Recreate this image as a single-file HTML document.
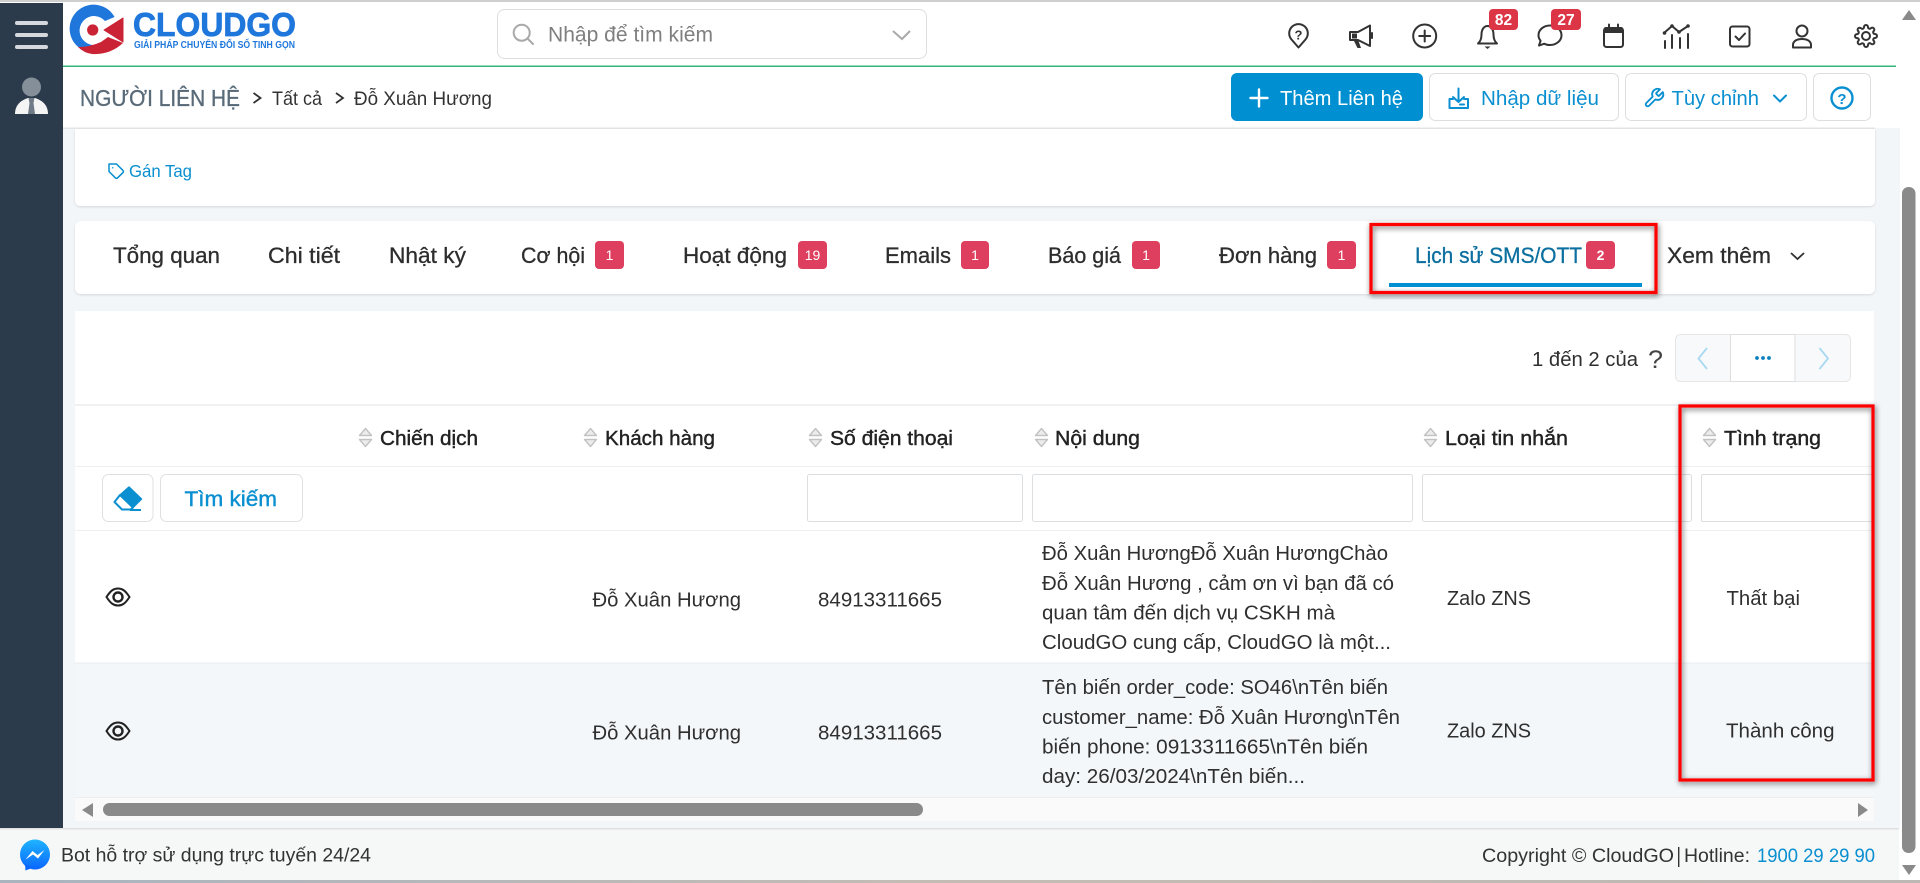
<!DOCTYPE html>
<html lang="vi">
<head>
<meta charset="utf-8">
<title>CloudGO - Người liên hệ</title>
<style>
html,body{margin:0;padding:0;width:1920px;height:883px;overflow:hidden;background:#fff}
svg{display:block}
text{font-family:"Liberation Sans","DejaVu Sans",sans-serif;fill:#333;white-space:pre}
.t{font-size:20px;fill:#2f2f2f}
.h{font-size:20px;fill:#222;stroke:#222;stroke-width:.4px}
.tab{font-size:22.5px;fill:#2d2d2d;stroke:#2d2d2d;stroke-width:.3px}
.b{font-size:14px;fill:#fff;text-anchor:middle}
.blue{fill:#0a8fd0}
.ic{fill:none;stroke:#333;stroke-width:2;stroke-linecap:round;stroke-linejoin:round}
.bi{fill:none;stroke:#0a8fd0;stroke-width:2;stroke-linecap:round;stroke-linejoin:round}
.sort{fill:#ececec;stroke:#c2c2c2;stroke-width:1.4;stroke-linejoin:round}
</style>
</head>
<body>
<svg width="1920" height="883" viewBox="0 0 1920 883" xmlns="http://www.w3.org/2000/svg">
<defs>
<filter id="cs" x="-2%" y="-10%" width="104%" height="120%"><feDropShadow dx="0" dy="1" stdDeviation="1.2" flood-color="#000" flood-opacity=".12"/></filter>
<filter id="rs" x="-10%" y="-10%" width="120%" height="120%"><feDropShadow dx="1" dy="2" stdDeviation="3" flood-color="#000" flood-opacity=".6"/></filter>
<linearGradient id="ms" x1="0" y1="0" x2="0" y2="1"><stop offset="0" stop-color="#1fb4ff"/><stop offset="1" stop-color="#0a66ff"/></linearGradient>
<linearGradient id="bt" x1="0" y1="0" x2="1" y2="0"><stop offset="0" stop-color="#a9b4bf"/><stop offset=".5" stop-color="#c4bcb4"/><stop offset="1" stop-color="#bdb8b4"/></linearGradient>
</defs>

<!-- base -->
<rect width="1920" height="883" fill="#fff"/>
<rect x="63" y="128" width="1837" height="700" fill="#f3f6f9"/>
<rect x="0" y="0" width="1920" height="2" fill="#cfcfcf"/>

<!-- sidebar -->
<rect x="0" y="3" width="63" height="825" fill="#2c3b4b"/>
<rect x="15" y="21" width="33" height="4" rx="2" fill="#d5d8dc"/>
<rect x="15" y="33" width="33" height="4" rx="2" fill="#d5d8dc"/>
<rect x="15" y="45" width="33" height="4" rx="2" fill="#d5d8dc"/>
<circle cx="31.5" cy="87" r="9.5" fill="#858f99"/>
<path d="M15 114C15 104 22 100 28 98L35 98C41 100 48 104 48 114Z" fill="#f4f4f4"/>
<path d="M28.5 98L34.5 98L33.5 103L35 114L28 114L29.5 103Z" fill="#6f7b87"/>

<!-- logo -->
<path d="M114.6 17A24 24 0 1 0 78.5 47.3Q92 47 103 42A14.5 14.5 0 1 1 105 21Z" fill="#1f77dc"/>
<circle cx="92.7" cy="30" r="5.6" fill="#cb2336"/>
<path d="M104 30L123 18V42Z" fill="#cb2336" stroke="#cb2336" stroke-width="1" stroke-linejoin="round"/>
<path d="M78 47Q90 47 101 42L108 37L123 43Q110 55 92 54Q84 53 78 47Z" fill="#cb2336"/>
<text x="133" y="36" font-size="33" font-weight="700" textLength="163" lengthAdjust="spacingAndGlyphs" style="fill:#1f77dc;stroke:#1f77dc;stroke-width:.8px">CLOUDGO</text>
<text x="134" y="48" font-size="10.5" font-weight="700" textLength="161" lengthAdjust="spacingAndGlyphs" style="fill:#1f77dc">GIẢI PHÁP CHUYỂN ĐỔI SỐ TINH GỌN</text>

<!-- search -->
<rect x="497.5" y="9.5" width="429" height="49" rx="7" fill="#fff" stroke="#dedede"/>
<circle cx="521.7" cy="32.7" r="8" fill="none" stroke="#a9a9a9" stroke-width="2"/>
<path d="M527.5 38.5L533 44" stroke="#a9a9a9" stroke-width="2" stroke-linecap="round"/>
<text x="548" y="41.7" font-size="21.5" textLength="165" lengthAdjust="spacingAndGlyphs" style="fill:#7f7f7f">Nhập để tìm kiếm</text>
<path d="M893 31L902 39L910 31" fill="none" stroke="#a9a9a9" stroke-width="2"/>

<!-- header icons -->
<path class="ic" d="M1298.5 47.5L1291.5 39.5A9.3 9.3 0 1 1 1305.5 39.5Z"/>
<text x="1298.5" y="39.5" font-size="13" font-weight="700" text-anchor="middle">?</text>
<path class="ic" stroke-width="2.4" d="M1350 32H1358L1370 25.5V46L1358 40H1350Z"/>
<path d="M1354 41L1357.5 48H1361L1358.5 41Z" fill="#333"/>
<path d="M1352 33.5H1357V38.5H1352Z" fill="#333"/>
<path d="M1372 33V38" class="ic"/>
<circle class="ic" cx="1424.7" cy="36" r="11.5"/>
<path class="ic" d="M1424.7 30.5V41.5M1419.2 36H1430.2"/>
<path class="ic" d="M1478 43.5C1481 41 1481.5 38 1481.5 34.5C1481.5 29.5 1484 26 1487.5 26C1491 26 1493.5 29.5 1493.5 34.5C1493.5 38 1494 41 1497 43.5Z"/>
<path d="M1484.5 46.5H1490.5L1487.5 49Z" fill="#333"/>
<path class="ic" d="M1550 25.5C1556.4 25.5 1561.5 29.8 1561.5 35.2C1561.5 40.6 1556.4 45 1550 45C1548 45 1546 44.6 1544.4 43.7L1539 45.5L1540.6 40.7C1539.2 39 1538.5 37.2 1538.5 35.2C1538.5 29.8 1543.6 25.5 1550 25.5Z"/>
<rect x="1489" y="9" width="29" height="21" rx="4" fill="#dc3545"/>
<text class="b" x="1503.5" y="25" style="font-size:15.5px;font-weight:700">82</text>
<rect x="1551" y="9" width="30" height="21" rx="4" fill="#dc3545"/>
<text class="b" x="1566" y="25" style="font-size:15.5px;font-weight:700">27</text>
<rect class="ic" x="1604" y="28" width="19" height="19" rx="2.5"/>
<path d="M1604 33V29Q1604 27 1606 27H1621Q1623 27 1623 29V33Z" fill="#333"/>
<path class="ic" d="M1609 24.5V27M1618 24.5V27"/>
<path class="ic" d="M1664 33L1672 26L1679 32L1688 26"/>
<circle cx="1664.5" cy="33" r="1.8" fill="#333"/><circle cx="1672" cy="26" r="1.8" fill="#333"/><circle cx="1679" cy="32" r="1.8" fill="#333"/><circle cx="1688" cy="26" r="1.8" fill="#333"/>
<path class="ic" d="M1665 41V48M1672 35V48M1680 38V48M1688 34V48"/>
<rect class="ic" x="1730" y="26.5" width="19.5" height="20" rx="2.5"/>
<path class="ic" d="M1735.5 36.5L1739 40L1745 33.5"/>
<circle class="ic" cx="1802" cy="31" r="5.5"/>
<path class="ic" d="M1793 47.5V45C1793 41 1797 39 1802 39C1807 39 1811 41 1811 45V47.5Z"/>
<g transform="translate(1854 24)"><circle class="ic" cx="12" cy="12" r="4"/><path class="ic" d="M19.4 15a1.65 1.65 0 0 0 .33 1.82l.06.06a2 2 0 0 1 0 2.83 2 2 0 0 1-2.83 0l-.06-.06a1.65 1.65 0 0 0-1.82-.33 1.65 1.65 0 0 0-1 1.51V21a2 2 0 0 1-2 2 2 2 0 0 1-2-2v-.09A1.65 1.65 0 0 0 9 19.4a1.65 1.65 0 0 0-1.82.33l-.06.06a2 2 0 0 1-2.83 0 2 2 0 0 1 0-2.83l.06-.06a1.65 1.65 0 0 0 .33-1.82 1.65 1.65 0 0 0-1.51-1H3a2 2 0 0 1-2-2 2 2 0 0 1 2-2h.09A1.65 1.65 0 0 0 4.6 9a1.65 1.65 0 0 0-.33-1.82l-.06-.06a2 2 0 0 1 0-2.83 2 2 0 0 1 2.83 0l.06.06a1.65 1.65 0 0 0 1.82.33H9a1.65 1.65 0 0 0 1-1.51V3a2 2 0 0 1 2-2 2 2 0 0 1 2 2v.09a1.65 1.65 0 0 0 1 1.51 1.65 1.65 0 0 0 1.82-.33l.06-.06a2 2 0 0 1 2.83 0 2 2 0 0 1 0 2.83l-.06.06a1.65 1.65 0 0 0-.33 1.82V9a1.65 1.65 0 0 0 1.51 1H21a2 2 0 0 1 2 2 2 2 0 0 1-2 2h-.09a1.65 1.65 0 0 0-1.51 1z"/></g>

<rect x="63" y="65.5" width="1833" height="1.5" fill="#34b67a"/>

<!-- breadcrumb -->
<text x="80" y="106" font-size="23" textLength="160" lengthAdjust="spacingAndGlyphs" style="fill:#596a78;stroke:#596a78;stroke-width:.35px">NGƯỜI LIÊN HỆ</text>
<path d="M253.5 93L260.5 98L253.5 103" fill="none" stroke="#333" stroke-width="1.8"/>
<text x="272" y="105" font-size="19.5" textLength="50" lengthAdjust="spacingAndGlyphs">Tất cả</text>
<path d="M336 93L343 98L336 103" fill="none" stroke="#333" stroke-width="1.8"/>
<text x="354" y="105" font-size="19.5" textLength="138" lengthAdjust="spacingAndGlyphs">Đỗ Xuân Hương</text>

<!-- action buttons -->
<rect x="1231" y="73" width="192" height="48" rx="6" fill="#008fd1"/>
<path d="M1259 89.5V106.5M1250.5 98H1267.5" stroke="#fff" stroke-width="2.4" stroke-linecap="round"/>
<text x="1280" y="105" font-size="20" textLength="123" lengthAdjust="spacingAndGlyphs" style="fill:#fff">Thêm Liên hệ</text>
<rect x="1429.5" y="73.5" width="189" height="47" rx="6" fill="#fff" stroke="#dedede"/>
<path class="bi" d="M1458.5 88.5V102M1453 97L1458.5 102L1464 97"/>
<path class="bi" d="M1453 99H1449.5V108H1468V99H1464M1460 104.5H1464"/>
<text class="blue" x="1481" y="105" font-size="20.5" textLength="118" lengthAdjust="spacingAndGlyphs">Nhập dữ liệu</text>
<rect x="1625.5" y="73.5" width="181" height="47" rx="6" fill="#fff" stroke="#dedede"/>
<g transform="translate(1643 87) scale(.92)"><path class="bi" d="M14.7 6.3a1 1 0 0 0 0 1.4l1.6 1.6a1 1 0 0 0 1.4 0l3.77-3.77a6 6 0 0 1-7.94 7.94l-6.91 6.91a2.12 2.12 0 0 1-3-3l6.91-6.91a6 6 0 0 1 7.94-7.94l-3.76 3.76z"/></g>
<text class="blue" x="1671.5" y="105" font-size="20.5" textLength="87.5" lengthAdjust="spacingAndGlyphs">Tùy chỉnh</text>
<path class="bi" d="M1774 95.5L1780 101.5L1786 95.5"/>
<rect x="1813.5" y="73.5" width="57" height="47" rx="6" fill="#fff" stroke="#dedede"/>
<circle cx="1842" cy="98" r="10.5" fill="none" stroke="#0a8fd0" stroke-width="2.4"/>
<text class="blue" x="1842" y="104" font-size="15" font-weight="700" text-anchor="middle">?</text>
<rect x="63" y="127.5" width="1812" height="1.5" fill="#e3e5e7"/>

<!-- tag card -->
<path d="M75 129H1875V200Q1875 206 1869 206H81Q75 206 75 200Z" fill="#fff" filter="url(#cs)"/>
<g transform="translate(107.5 162.5) scale(.75)"><path class="bi" stroke-width="2.2" d="M20.59 13.41l-7.17 7.17a2 2 0 0 1-2.83 0L2 12V2h10l8.59 8.59a2 2 0 0 1 0 2.82z"/><circle cx="7" cy="7" r="1" fill="#0a8fd0"/></g>
<text class="blue" x="129" y="177" font-size="17.5" textLength="63" lengthAdjust="spacingAndGlyphs">Gán Tag</text>

<!-- tabs card -->
<rect x="75" y="221" width="1800" height="73" rx="6" fill="#fff" filter="url(#cs)"/>
<text class="tab" x="113" y="263" textLength="107" lengthAdjust="spacingAndGlyphs">Tổng quan</text>
<text class="tab" x="268" y="263" textLength="72" lengthAdjust="spacingAndGlyphs">Chi tiết</text>
<text class="tab" x="389" y="263" textLength="77" lengthAdjust="spacingAndGlyphs">Nhật ký</text>
<text class="tab" x="521" y="263" textLength="64" lengthAdjust="spacingAndGlyphs">Cơ hội</text>
<rect x="595" y="241" width="29" height="28" rx="4" fill="#df3f5e"/><text class="b" x="609.5" y="260">1</text>
<text class="tab" x="683" y="263" textLength="104" lengthAdjust="spacingAndGlyphs">Hoạt động</text>
<rect x="798" y="241" width="29" height="28" rx="4" fill="#df3f5e"/><text class="b" x="812.5" y="260">19</text>
<text class="tab" x="885" y="263" textLength="66" lengthAdjust="spacingAndGlyphs">Emails</text>
<rect x="961" y="241" width="28" height="28" rx="4" fill="#df3f5e"/><text class="b" x="975" y="260">1</text>
<text class="tab" x="1048" y="263" textLength="73" lengthAdjust="spacingAndGlyphs">Báo giá</text>
<rect x="1132" y="241" width="28" height="28" rx="4" fill="#df3f5e"/><text class="b" x="1146" y="260">1</text>
<text class="tab" x="1219" y="263" textLength="98" lengthAdjust="spacingAndGlyphs">Đơn hàng</text>
<rect x="1327" y="241" width="29" height="28" rx="4" fill="#df3f5e"/><text class="b" x="1341.5" y="260">1</text>
<text class="tab" x="1415" y="263" textLength="167" lengthAdjust="spacingAndGlyphs" style="fill:#0b6f9f;stroke:#0b6f9f">Lịch sử SMS/OTT</text>
<rect x="1586" y="241" width="29" height="28" rx="4" fill="#df3f5e"/><text class="b" x="1600.5" y="260" style="font-weight:700">2</text>
<rect x="1389" y="283" width="253" height="4" fill="#008fd1"/>
<text class="tab" x="1667" y="263" textLength="104" lengthAdjust="spacingAndGlyphs">Xem thêm</text>
<path d="M1791 253L1797.5 259L1804 253" fill="none" stroke="#333" stroke-width="1.8"/>

<!-- main card -->
<rect x="75" y="311" width="1799" height="510" fill="#fff"/>
<text class="t" x="1532" y="366" textLength="106" lengthAdjust="spacingAndGlyphs">1 đến 2 của</text>
<text x="1648" y="368" font-size="25" textLength="15" lengthAdjust="spacingAndGlyphs" style="fill:#444">?</text>
<rect x="1675.5" y="334.5" width="175" height="47" rx="5" fill="#f8f9fa" stroke="#e6e6e6"/>
<rect x="1730.5" y="334.5" width="64.5" height="47" fill="#fff" stroke="#dedede"/>
<path d="M1707 348L1698.5 358.5L1707 369" fill="none" stroke="#a9d9f2" stroke-width="1.8"/>
<path d="M1819.5 348L1828 358.5L1819.5 369" fill="none" stroke="#a9d9f2" stroke-width="1.8"/>
<circle cx="1757" cy="358" r="1.9" fill="#0a7fbd"/><circle cx="1763" cy="358" r="1.9" fill="#0a7fbd"/><circle cx="1769" cy="358" r="1.9" fill="#0a7fbd"/>
<rect x="75" y="404" width="1799" height="2" fill="#f0f1f3"/>

<!-- table header -->
<g>
<path class="sort" d="M365.5 428.5L371.5 435.5H359.5Z"/><path class="sort" d="M359.5 439.5H371.5L365.5 446.5Z"/>
<path class="sort" d="M590.5 428.5L596.5 435.5H584.5Z"/><path class="sort" d="M584.5 439.5H596.5L590.5 446.5Z"/>
<path class="sort" d="M815.5 428.5L821.5 435.5H809.5Z"/><path class="sort" d="M809.5 439.5H821.5L815.5 446.5Z"/>
<path class="sort" d="M1041.5 428.5L1047.5 435.5H1035.5Z"/><path class="sort" d="M1035.5 439.5H1047.5L1041.5 446.5Z"/>
<path class="sort" d="M1430.5 428.5L1436.5 435.5H1424.5Z"/><path class="sort" d="M1424.5 439.5H1436.5L1430.5 446.5Z"/>
<path class="sort" d="M1709.5 428.5L1715.5 435.5H1703.5Z"/><path class="sort" d="M1703.5 439.5H1715.5L1709.5 446.5Z"/>
</g>
<text class="h" x="380" y="445" textLength="98" lengthAdjust="spacingAndGlyphs">Chiến dịch</text>
<text class="h" x="605" y="445" textLength="110" lengthAdjust="spacingAndGlyphs">Khách hàng</text>
<text class="h" x="830" y="445" textLength="123" lengthAdjust="spacingAndGlyphs">Số điện thoại</text>
<text class="h" x="1055" y="445" textLength="85" lengthAdjust="spacingAndGlyphs">Nội dung</text>
<text class="h" x="1445" y="445" textLength="123" lengthAdjust="spacingAndGlyphs">Loại tin nhắn</text>
<text class="h" x="1724" y="445" textLength="97" lengthAdjust="spacingAndGlyphs">Tình trạng</text>
<rect x="75" y="466" width="1799" height="1" fill="#eef0f2"/>

<!-- filter row -->
<rect x="102.5" y="474.5" width="50.5" height="47" rx="6" fill="#fff" stroke="#e0e0e0"/>
<path d="M129 487L141.5 499L133 507.5L120 495Z" fill="#0a8fd0" stroke="#0a8fd0" stroke-width="1.5" stroke-linejoin="round"/>
<path d="M120 495L133 507.5L130.5 509.5H122L114.5 502Z" fill="#fff" stroke="#0a8fd0" stroke-width="2" stroke-linejoin="round"/>
<path d="M130 510H141" stroke="#0a8fd0" stroke-width="2"/>
<rect x="160.5" y="474.5" width="142" height="47" rx="6" fill="#fff" stroke="#e0e0e0"/>
<text class="blue" x="184.5" y="506" font-size="21.5" textLength="92.5" lengthAdjust="spacingAndGlyphs" style="stroke:#0a8fd0;stroke-width:.4px">Tìm kiếm</text>
<rect x="807.5" y="474.5" width="215" height="47" rx="2" fill="#fff" stroke="#dcdfe2"/>
<rect x="1032.5" y="474.5" width="380" height="47" rx="2" fill="#fff" stroke="#dcdfe2"/>
<rect x="1422.5" y="474.5" width="269" height="47" rx="2" fill="#fff" stroke="#dcdfe2"/>
<path d="M1874 474.5H1703Q1701.5 474.5 1701.5 476V520Q1701.5 521.5 1703 521.5H1874" fill="#fff" stroke="#dcdfe2"/>
<rect x="75" y="530" width="1799" height="1" fill="#eef0f2"/>

<!-- row 1 -->
<path d="M106.5 597C111 590 114 588.5 118 588.5C122 588.5 125 590 129.5 597C125 604 122 605.5 118 605.5C114 605.5 111 604 106.5 597Z" fill="none" stroke="#222" stroke-width="2"/>
<circle cx="118" cy="597" r="4.5" fill="none" stroke="#222" stroke-width="2.4"/>
<text class="t" x="592.5" y="606.5" textLength="148.5" lengthAdjust="spacingAndGlyphs">Đỗ Xuân Hương</text>
<text class="t" x="818" y="606.5" textLength="124" lengthAdjust="spacingAndGlyphs">84913311665</text>
<text class="t" x="1042" y="560" textLength="346" lengthAdjust="spacingAndGlyphs">Đỗ Xuân HươngĐỗ Xuân HươngChào</text>
<text class="t" x="1042" y="590" textLength="352" lengthAdjust="spacingAndGlyphs">Đỗ Xuân Hương , cảm ơn vì bạn đã có</text>
<text class="t" x="1042" y="619.5" textLength="293" lengthAdjust="spacingAndGlyphs">quan tâm đến dịch vụ CSKH mà</text>
<text class="t" x="1042" y="649" textLength="349" lengthAdjust="spacingAndGlyphs">CloudGO cung cấp, CloudGO là một...</text>
<text class="t" x="1447" y="605" textLength="84" lengthAdjust="spacingAndGlyphs">Zalo ZNS</text>
<text class="t" x="1726.5" y="605" textLength="73.5" lengthAdjust="spacingAndGlyphs">Thất bại</text>

<!-- row 2 -->
<rect x="75" y="663" width="1799" height="134" fill="#f4f7fa"/>
<rect x="75" y="662.5" width="1799" height="1" fill="#eaedf0"/>
<path d="M106.5 731C111 724 114 722.5 118 722.5C122 722.5 125 724 129.5 731C125 738 122 739.5 118 739.5C114 739.5 111 738 106.5 731Z" fill="none" stroke="#222" stroke-width="2"/>
<circle cx="118" cy="731" r="4.5" fill="none" stroke="#222" stroke-width="2.4"/>
<text class="t" x="592.5" y="739.5" textLength="148.5" lengthAdjust="spacingAndGlyphs">Đỗ Xuân Hương</text>
<text class="t" x="818" y="739.5" textLength="124" lengthAdjust="spacingAndGlyphs">84913311665</text>
<text class="t" x="1042" y="694" textLength="346" lengthAdjust="spacingAndGlyphs">Tên biến order_code: SO46\nTên biến</text>
<text class="t" x="1042" y="724" textLength="358" lengthAdjust="spacingAndGlyphs">customer_name: Đỗ Xuân Hương\nTên</text>
<text class="t" x="1042" y="753.5" textLength="326" lengthAdjust="spacingAndGlyphs">biến phone: 0913311665\nTên biến</text>
<text class="t" x="1042" y="783" textLength="263" lengthAdjust="spacingAndGlyphs">day: 26/03/2024\nTên biến...</text>
<text class="t" x="1447" y="737.5" textLength="84" lengthAdjust="spacingAndGlyphs">Zalo ZNS</text>
<text class="t" x="1726" y="737.5" textLength="108.5" lengthAdjust="spacingAndGlyphs">Thành công</text>

<!-- horizontal scrollbar -->
<rect x="75" y="797" width="1799" height="24" fill="#fafafa"/>
<rect x="75" y="797" width="1799" height="1" fill="#eceeef"/>
<path d="M93 803V817L82 810Z" fill="#8a8a8a"/>
<rect x="103" y="803" width="820" height="13" rx="6.5" fill="#8a8a8a"/>
<path d="M1858 803V817L1868 810Z" fill="#8a8a8a"/>

<!-- annotations -->
<rect x="1371" y="224.5" width="285" height="68" fill="none" stroke="#f00" stroke-width="3.2" filter="url(#rs)"/>
<rect x="1680" y="406" width="193" height="374" fill="none" stroke="#f00" stroke-width="3.2" filter="url(#rs)"/>

<!-- footer -->
<rect x="0" y="828" width="1899" height="52" fill="#f6f7f7"/>
<rect x="0" y="828" width="1899" height="1.5" fill="#dfe1e2"/>
<circle cx="35" cy="854.5" r="15" fill="url(#ms)"/>
<path d="M25 864L25.5 870.5L32 868Z" fill="#0a66ff"/>
<path d="M25.5 859.5L32.5 851L37.5 855L44.5 850L38 858.5L33 854.5Z" fill="#fff"/>
<text x="61" y="861.5" font-size="19.5" textLength="310" lengthAdjust="spacingAndGlyphs">Bot hỗ trợ sử dụng trực tuyến 24/24</text>
<text x="1482" y="862" font-size="19.5" textLength="192" lengthAdjust="spacingAndGlyphs">Copyright © CloudGO</text>
<rect x="1678" y="847" width="1.4" height="20" fill="#333"/>
<text x="1684" y="862" font-size="19.5" textLength="66" lengthAdjust="spacingAndGlyphs">Hotline:</text>
<text class="blue" x="1757" y="862" font-size="19.5" textLength="118" lengthAdjust="spacingAndGlyphs">1900 29 29 90</text>
<rect x="0" y="880" width="1920" height="3" fill="url(#bt)"/>

<!-- vertical scrollbar -->
<rect x="1900" y="3" width="20" height="877" fill="#fff"/>
<path d="M1909 10L1916 20H1902Z" fill="#8a8a8a"/>
<rect x="1902" y="187" width="13.5" height="666" rx="6.5" fill="#8a8a8a"/>
<path d="M1902 865H1916L1909 875Z" fill="#8a8a8a"/>
</svg>
</body>
</html>
